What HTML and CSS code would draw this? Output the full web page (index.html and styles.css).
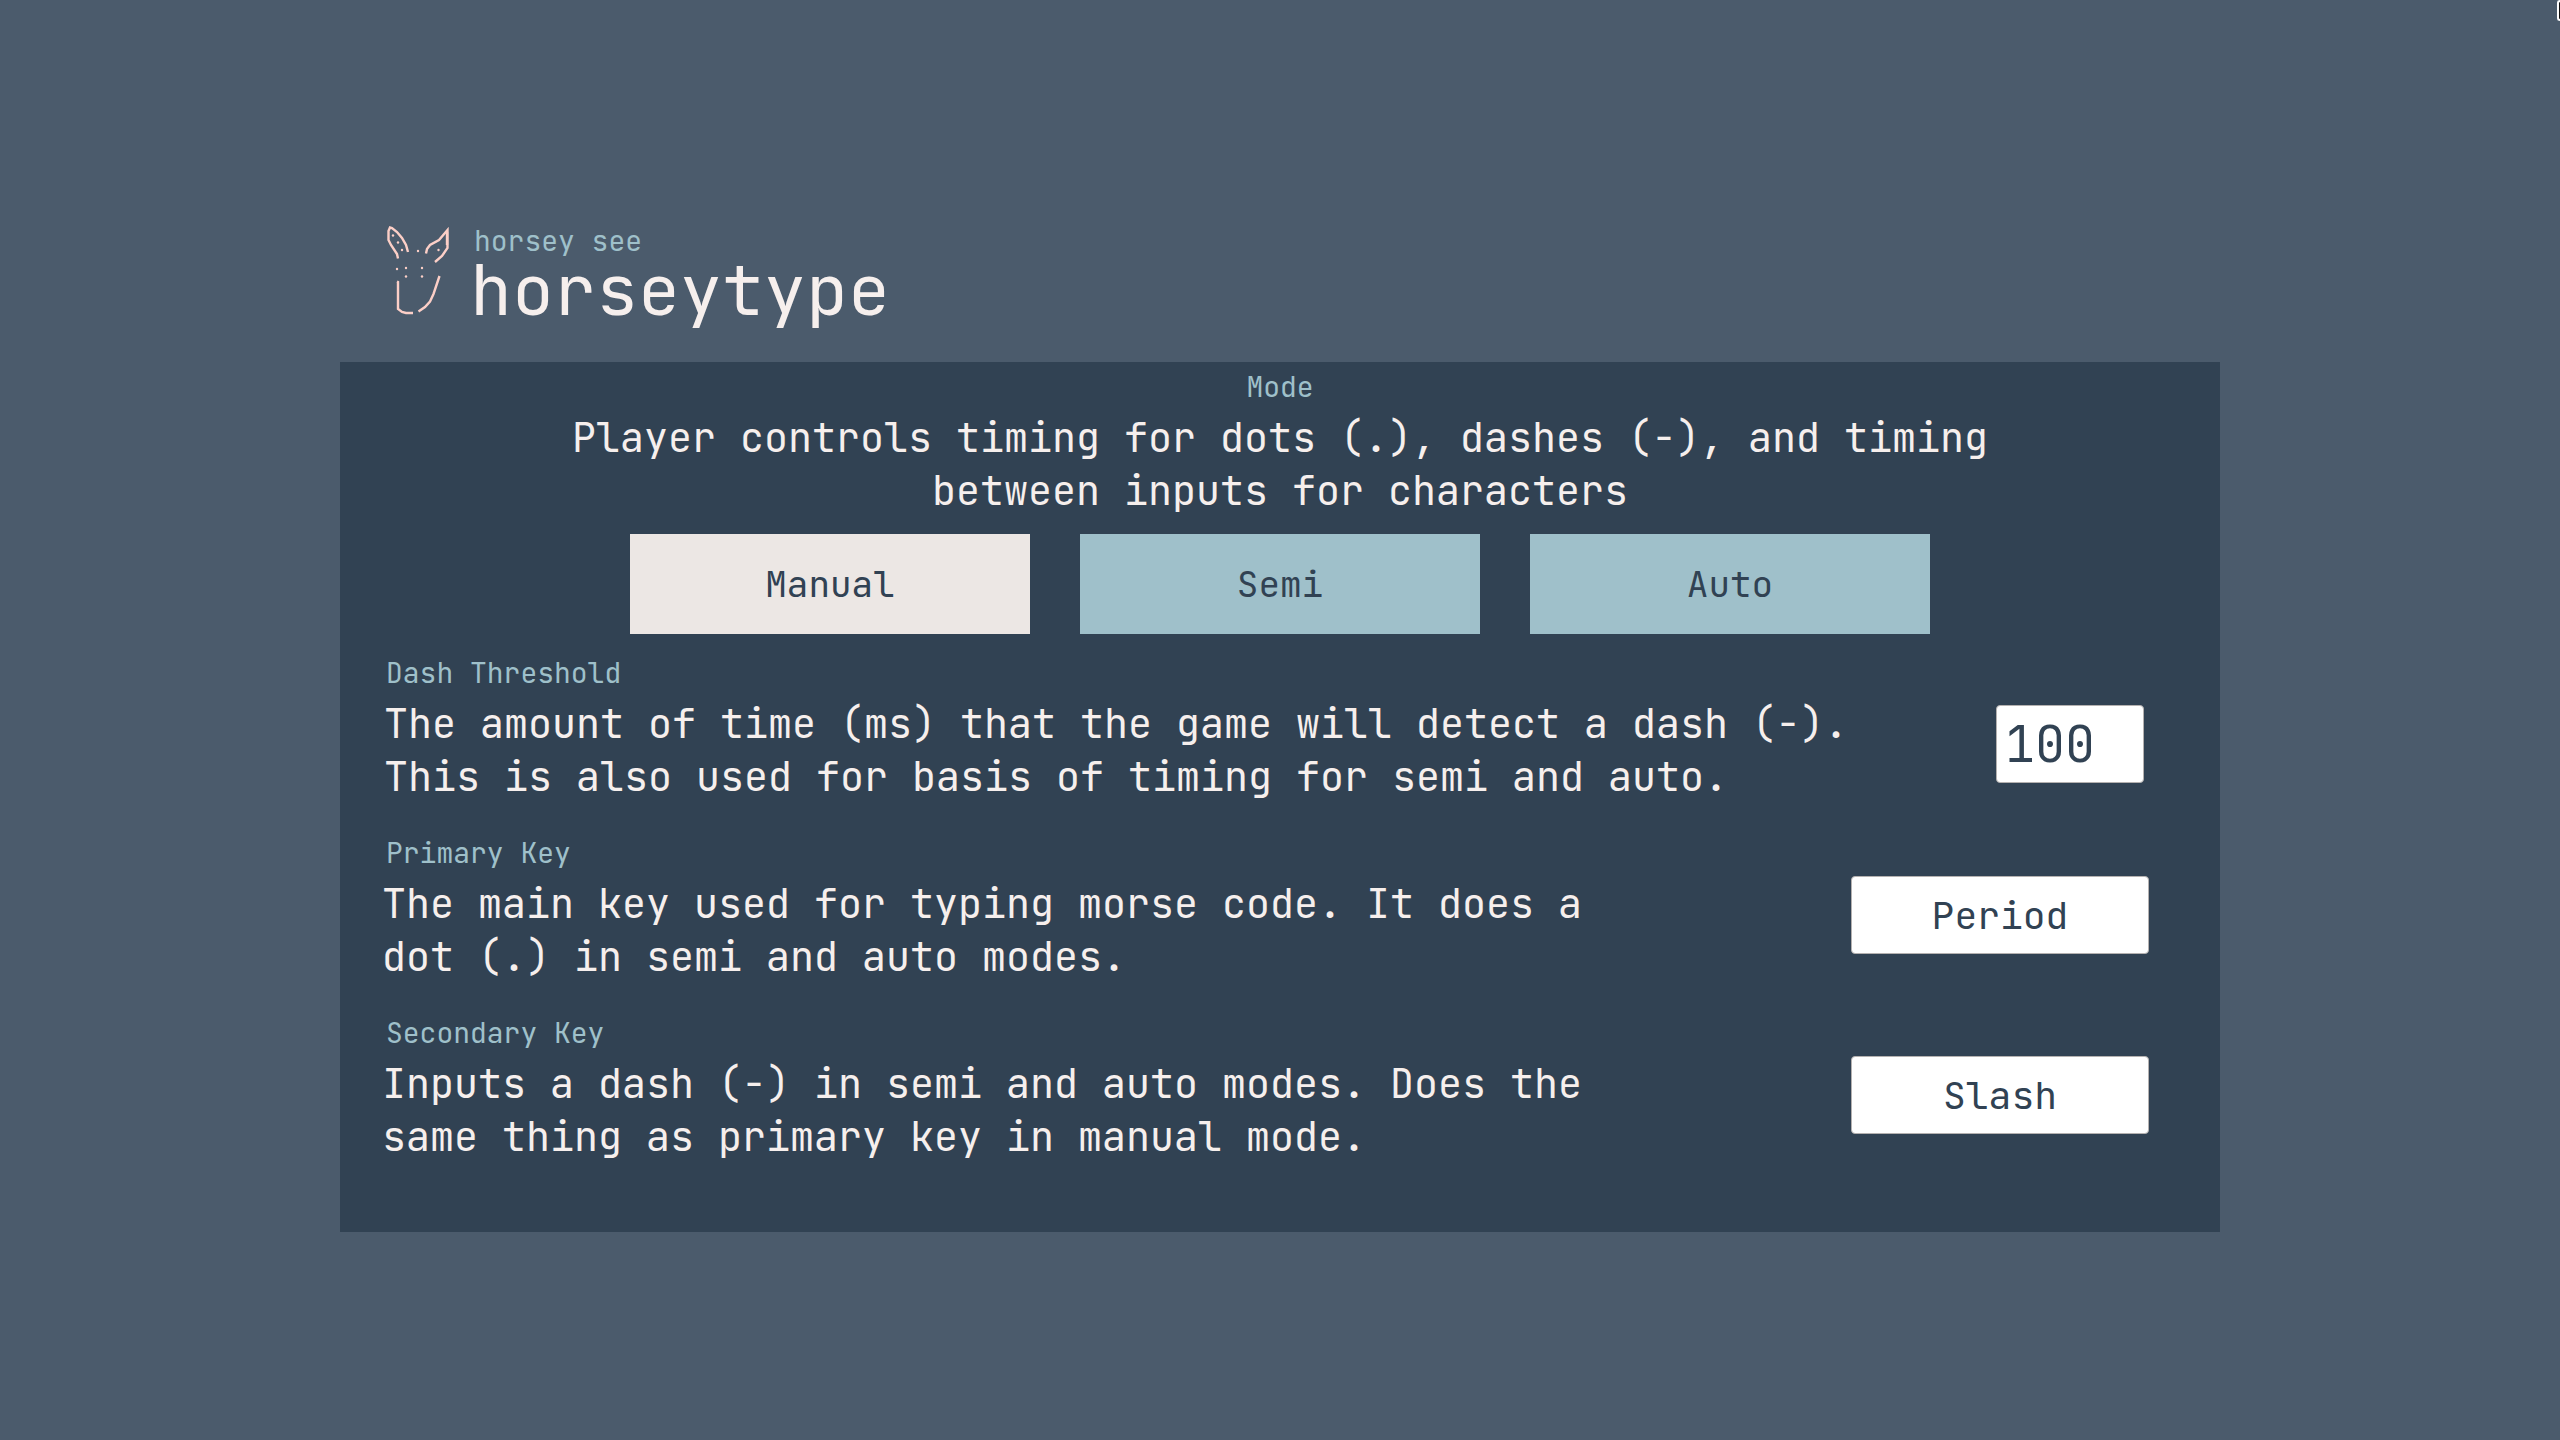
FILE: index.html
```html
<!DOCTYPE html>
<html lang="en">
<head>
  <meta charset="utf-8">
  <meta name="viewport" content="width=device-width, initial-scale=1">
  <title>horseytype</title>
  <link rel="stylesheet" href="styles.css">
</head>
<body>
  <div class="corner-tab"></div>
  <div class="page">
    <header class="brand">
      <svg class="brand-logo" viewBox="16 9 64 92" aria-hidden="true">
        <g class="logo-lines">
          <path d="M28 43.500 L27 39 L21 30 L18.500 25 V16 L20 12.500 L22 13 L27 17 L32 23 L36 30 L38 37"/>
          <path d="M56 38.500 L57 34 L60 30 L69 25 L77.500 15 V33 L72 41 L65 47"/>
          <path d="M77 17 V30"/>
          <path d="M27 66.500 L28 67 V94 L32 97 L36 98 H43"/>
          <path d="M48.500 96.500 L55 92 L60 86.500 L63.500 79 L69.500 61"/>
        </g>
        <g class="logo-dots">
          <circle cx="23" cy="20.500" r="1.200"/>
          <circle cx="28" cy="27.500" r="1.200"/>
          <circle cx="32" cy="35" r="1.200"/>
          <circle cx="48" cy="36" r="1.200"/>
          <circle cx="68.500" cy="35" r="1.200"/>
          <circle cx="27" cy="54" r="1.200"/>
          <circle cx="36" cy="53" r="1.200"/>
          <circle cx="52" cy="53" r="1.200"/>
          <circle cx="36" cy="61.500" r="1.200"/>
          <circle cx="52" cy="61.500" r="1.200"/>
        </g>
      </svg>
      <div class="brand-text">
        <p class="tagline">horsey see</p>
        <h1 class="title">horseytype</h1>
      </div>
    </header>

    <main class="panel">
      <section class="mode">
        <h2 class="label">Mode</h2>
        <p class="description mode-description">Player controls timing for dots (.), dashes (-), and timing between inputs for characters</p>
        <div class="mode-buttons">
          <button class="mode-button active" type="button">Manual</button>
          <button class="mode-button" type="button">Semi</button>
          <button class="mode-button" type="button">Auto</button>
        </div>
      </section>

      <section class="setting">
        <div class="setting-text">
          <label class="label setting-label" for="threshold">Dash Threshold</label>
          <p class="description threshold-description">The amount of time (ms) that the game will detect a dash (-). This is also used for basis of timing for semi and auto.</p>
        </div>
        <input class="number-field" id="threshold" type="number" value="100">
      </section>

      <section class="setting">
        <div class="setting-text key-text">
          <label class="label setting-label" for="primary">Primary Key</label>
          <p class="description">The main key used for typing morse code. It does a dot (.) in semi and auto modes.</p>
        </div>
        <button class="key-button" id="primary" type="button">Period</button>
      </section>

      <section class="setting">
        <div class="setting-text key-text">
          <label class="label setting-label" for="secondary">Secondary Key</label>
          <p class="description">Inputs a dash (-) in semi and auto modes. Does the same thing as primary key in manual mode.</p>
        </div>
        <button class="key-button" id="secondary" type="button">Slash</button>
      </section>
    </main>
  </div>
</body>
</html>
```
FILE: styles.css
```css
:root {
  --page: #4b5b6c;
  --panel: #314253;
  --accent: #9fc0ca;
  --text: #f6efed;
  --active: #ece7e4;
  --logo: #fccfc7;
  --font: "JetBrains Mono", "DejaVu Sans Mono", monospace;
}

* {
  box-sizing: border-box;
}

body {
  margin: 0;
  background: var(--page);
  color: var(--text);
  font-family: var(--font);
  overflow-x: hidden;
}

h1,
h2,
p {
  margin: 0;
  font-weight: 400;
}

button,
input {
  font-family: inherit;
  color: var(--panel);
}

.corner-tab {
  position: absolute;
  top: 0;
  right: 0;
  width: 3px;
  height: 21px;
  background: #111;
  border: 2px solid #fff;
  border-right: 0;
  border-radius: 3px 0 0 3px;
}

.page {
  display: flex;
  flex-direction: column;
  justify-content: center;
  max-width: 1880px;
  min-height: 100vh;
  margin: 0 auto;
}

.brand {
  display: flex;
  gap: 20px;
  padding: 16px 46px 36px;
}

.brand-logo {
  width: 64px;
  height: 92px;
}

.brand-text {
  height: 102px;
}

.logo-lines {
  fill: none;
  stroke: var(--logo);
  stroke-width: 2.4;
}

.logo-dots {
  fill: var(--logo);
}

.tagline {
  color: var(--accent);
  font-size: 28px;
  line-height: 34px;
  padding-left: 4px;
}

.title {
  font-size: 70px;
  line-height: 64px;
}

.panel {
  display: flex;
  flex-direction: column;
  gap: 31px;
  padding: 6px 42px 69px;
  background: var(--panel);
}

.mode {
  display: flex;
  flex-direction: column;
  align-items: center;
  margin-bottom: -11px;
}

.label {
  display: block;
  margin-bottom: 6px;
  color: var(--accent);
  font-size: 28px;
  line-height: 37px;
}

.setting-label {
  padding-left: 4px;
}

.description {
  font-size: 40px;
  line-height: 53px;
}

.mode-description {
  max-width: 1460px;
  text-align: center;
}

.threshold-description {
  padding-left: 2px;
}

.mode-buttons {
  display: flex;
  justify-content: center;
  gap: 50px;
  width: 100%;
  max-width: 1300px;
  margin-top: 17px;
}

.mode-button {
  flex: 1;
  height: 100px;
  padding: 0;
  border: 0;
  background: var(--accent);
  font-size: 36px;
}

.mode-button.active {
  background: var(--active);
}

.setting {
  display: flex;
  justify-content: space-between;
  align-items: flex-start;
}

.setting-text {
  max-width: 1500px;
}

.key-text {
  max-width: 1250px;
}

.number-field,
.key-button {
  height: 78px;
  border: 1px solid #b4b1b0;
  border-radius: 4px;
  background: #fff;
}

.number-field {
  width: 148px;
  margin: 51px 34px 0 0;
  padding: 0 8px;
  font-size: 50px;
  appearance: textfield;
}

.number-field::-webkit-inner-spin-button {
  display: none;
}

.key-button {
  width: 298px;
  margin: 42px 29px 0 0;
  font-size: 38px;
}
```
